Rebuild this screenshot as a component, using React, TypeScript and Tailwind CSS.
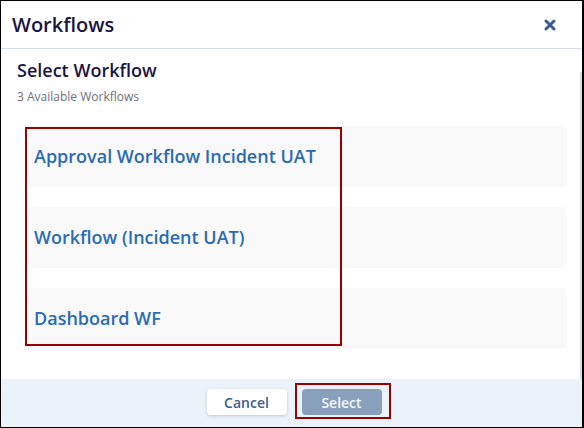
import React from "react";

const items = ["Approval Workflow Incident UAT", "Workflow (Incident UAT)", "Dashboard WF"];

export default function App() {
  return (
    <div
      className="relative flex h-[428px] w-[584px] flex-col border border-r-2 border-black bg-white"
      style={{ fontFamily: '"Open Sans", "Noto Sans", sans-serif' }}
    >
      <div className="flex h-[48px] shrink-0 items-center justify-between border-b border-[#d6deec] pl-[11px] pr-[26px]">
        <span className="text-[20px] font-semibold leading-none text-[#1b1545]">Workflows</span>
        <svg width="12" height="12" viewBox="0 0 12 12" className="mt-[1px]">
          <path d="M2 2 L10 10 M10 2 L2 10" stroke="#3a5b8f" strokeWidth="3" strokeLinecap="round" />
        </svg>
      </div>
      <div className="flex min-h-0 flex-1">
        <div className="flex-1 pl-[16px] pt-[9px]">
          <div className="text-[18px] font-semibold leading-[24px] text-[#1b1545]">Select Workflow</div>
          <div className="mt-[6px] text-[12px] leading-[17px] text-[#6e6e80]">3 Available Workflows</div>
          <div className="ml-[10px] mr-[13px] mt-[21px] flex flex-col gap-[20px]">
            {items.map((t) => (
              <div
                key={t}
                className="flex h-[61px] items-center rounded-[5px] bg-[#f9f9f9] pl-[7px] text-[18px] font-semibold text-[#2a6cb3]"
              >
                {t}
              </div>
            ))}
          </div>
        </div>
        <div className="mt-[23px] w-[2px] bg-[#d9dbe7]" />
      </div>
      <div className="flex h-[48px] shrink-0 items-start justify-center gap-[15px] bg-[#ecf2fa] pl-[5px] pt-[10px]">
        <button className="h-[26px] w-[80px] rounded-[4px] bg-white text-[14px] font-semibold text-[#3d5d8f] shadow-[0_1px_3px_rgba(60,80,120,0.25)]">
          Cancel
        </button>
        <button className="h-[26px] w-[80px] rounded-[4px] bg-[#89a0bc] text-[14px] font-semibold text-[#f3f6fa]">
          Select
        </button>
      </div>
      <div className="pointer-events-none absolute left-[24px] top-[126px] h-[219px] w-[317px] border-2 border-[#990000]" />
      <div className="pointer-events-none absolute left-[294px] top-[382px] h-[36px] w-[96px] border-2 border-[#990000]" />
    </div>
  );
}
